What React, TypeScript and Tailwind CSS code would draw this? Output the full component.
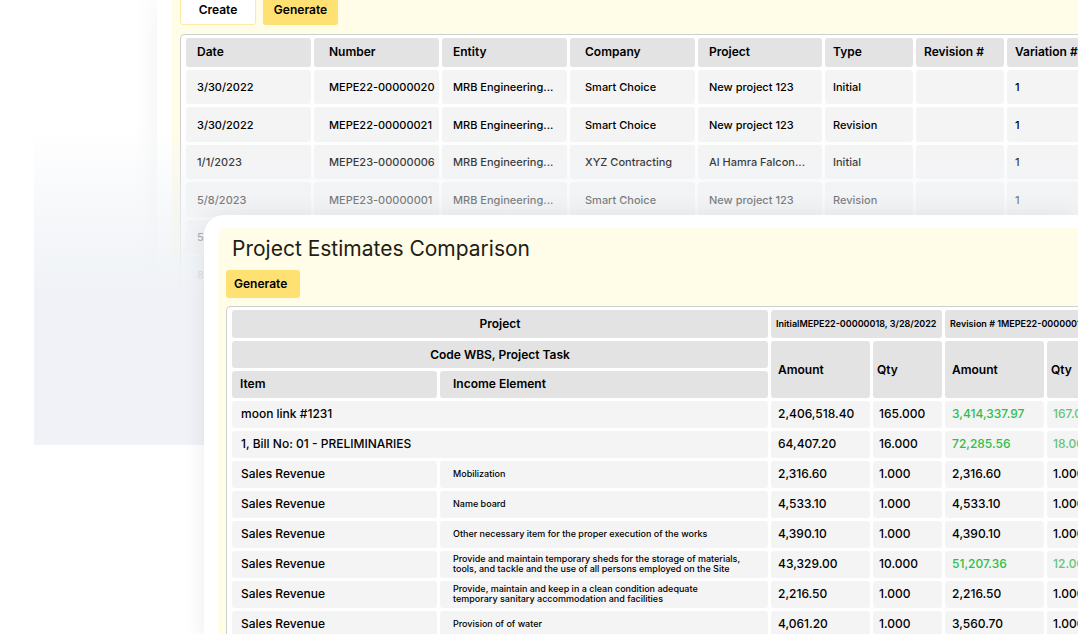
import clsx from "clsx";

type Estimate = {
    date: string;
    number: string;
    entity: string;
    company: string;
    project: string;
    type: string;
    revision: string;
    variation: string;
};

type Comparison = {
    item: string;
    element?: string;
    amount: string;
    qty: string;
    revAmount: string;
    revQty: string;
    changed?: boolean;
};

const estimateColumns: { key: keyof Estimate; label: string; width: string; pad: string }[] = [
    { key: "date", label: "Date", width: "w-[125px]", pad: "pl-[11px]" },
    { key: "number", label: "Number", width: "w-[125px]", pad: "pl-[15px]" },
    { key: "entity", label: "Entity", width: "w-[125px]", pad: "pl-[11px]" },
    { key: "company", label: "Company", width: "w-[125px]", pad: "pl-[15px]" },
    { key: "project", label: "Project", width: "w-[124px]", pad: "pl-[11px]" },
    { key: "type", label: "Type", width: "w-[88px]", pad: "pl-[8px]" },
    { key: "revision", label: "Revision #", width: "w-[88px]", pad: "pl-[8px]" },
    { key: "variation", label: "Variation #", width: "w-[88px]", pad: "pl-[8px]" },
];

const estimates: Estimate[] = [
    { date: "3/30/2022", number: "MEPE22-00000020", entity: "MRB Engineering...", company: "Smart Choice", project: "New project 123", type: "Initial", revision: "", variation: "1" },
    { date: "3/30/2022", number: "MEPE22-00000021", entity: "MRB Engineering...", company: "Smart Choice", project: "New project 123", type: "Revision", revision: "", variation: "1" },
    { date: "1/1/2023", number: "MEPE23-00000006", entity: "MRB Engineering...", company: "XYZ Contracting", project: "Al Hamra Falcon...", type: "Initial", revision: "", variation: "1" },
    { date: "5/8/2023", number: "MEPE23-00000001", entity: "MRB Engineering...", company: "Smart Choice", project: "New project 123", type: "Revision", revision: "", variation: "1" },
    { date: "5/", number: "", entity: "", company: "", project: "", type: "", revision: "", variation: "" },
    { date: "8", number: "", entity: "", company: "", project: "", type: "", revision: "", variation: "" },
];

const comparisons: Comparison[] = [
    { item: "moon link #1231", amount: "2,406,518.40", qty: "165.000", revAmount: "3,414,337.97", revQty: "167.000", changed: true },
    { item: "1, Bill No: 01 - PRELIMINARIES", amount: "64,407.20", qty: "16.000", revAmount: "72,285.56", revQty: "18.000", changed: true },
    { item: "Sales Revenue", element: "Mobilization", amount: "2,316.60", qty: "1.000", revAmount: "2,316.60", revQty: "1.000" },
    { item: "Sales Revenue", element: "Name board", amount: "4,533.10", qty: "1.000", revAmount: "4,533.10", revQty: "1.000" },
    { item: "Sales Revenue", element: "Other necessary item for the proper execution of the works", amount: "4,390.10", qty: "1.000", revAmount: "4,390.10", revQty: "1.000" },
    { item: "Sales Revenue", element: "Provide and maintain temporary sheds for the storage of materials,\ntools, and tackle and the use of all persons employed on the Site", amount: "43,329.00", qty: "10.000", revAmount: "51,207.36", revQty: "12.000", changed: true },
    { item: "Sales Revenue", element: "Provide, maintain and keep in a clean condition adequate\ntemporary sanitary accommodation and facilities", amount: "2,216.50", qty: "1.000", revAmount: "2,216.50", revQty: "1.000" },
    { item: "Sales Revenue", element: "Provision of of water", amount: "4,061.20", qty: "1.000", revAmount: "3,560.70", revQty: "1.000" },
];

const headCell = "rounded-[3px] bg-[#e3e3e3] p-0 text-[12px] leading-4 font-semibold";
const bodyCell = "rounded-[3px] bg-[#f4f4f4] p-0 pb-[2px] text-[12px] leading-4";

const EstimatesPanel = () => {
    return (
        <section className="col-start-1 row-start-1 ml-[157px] self-start bg-white pl-[15px] shadow-[0_0_28px_rgba(0,0,0,0.06)]">
            <div className="bg-[#fffce8] pl-2">
                <div className="-mt-1 flex gap-[7px]">
                    <button className="h-[29px] w-[76px] rounded-[3px] border border-[#ffe9a3] bg-white pb-[2px] text-[12px] font-semibold">
                        Create
                    </button>
                    <button className="h-[29px] w-[75px] rounded-[3px] bg-[#ffe072] pb-[2px] text-[12px] font-semibold">
                        Generate
                    </button>
                </div>
                <div className="mt-[9px] overflow-hidden rounded-tl-[5px] border-t border-l border-[#cfcfd2] bg-white pl-[2px]">
                    <table className="w-[915px] table-fixed border-separate border-spacing-[3px] text-left whitespace-nowrap">
                        <thead>
                            <tr className="h-[29px]">
                                {estimateColumns.map((col) => (
                                    <th key={col.key} scope="col" className={clsx(headCell, col.width, col.pad, "pb-[2px]")}>
                                        {col.label}
                                    </th>
                                ))}
                            </tr>
                        </thead>
                        <tbody>
                            {estimates.map((row, index) => (
                                <tr key={index} className="odd:h-[34px] even:h-[35px]">
                                    {estimateColumns.map((col) => (
                                        <td key={col.key} className={clsx("rounded-[3px] bg-[#f4f4f4] p-0 text-[11px] leading-4", col.pad)}>
                                            {row[col.key]}
                                        </td>
                                    ))}
                                </tr>
                            ))}
                        </tbody>
                    </table>
                </div>
            </div>
        </section>
    );
};

const ComparisonPanel = () => {
    return (
        <section className="col-start-1 row-start-1 mt-[215px] ml-[204px] rounded-tl-[20px] bg-white pt-[13px] pl-[14px] shadow-[0_0_24px_rgba(0,0,0,0.08)]">
            <div className="h-full rounded-tl-[8px] bg-[#fffce8] pl-2">
                <h2 className="pl-[6px] text-[21px] leading-[42px] font-normal text-[#1f1d14]">
                    Project Estimates Comparison
                </h2>
                <button className="block h-7 w-[74px] rounded-[3px] bg-[#ffe072] pl-2 text-left text-[12px] font-semibold">
                    Generate
                </button>
                <div className="mt-[8px] overflow-hidden rounded-tl-[5px] border-t border-l border-[#cfcfd2] bg-white pl-[2px]">
                    <table className="w-[890px] table-fixed border-separate border-spacing-[3px] text-left whitespace-nowrap">
                        <colgroup>
                            <col className="w-[205px]" />
                            <col className="w-[328px]" />
                            <col className="w-[99px]" />
                            <col className="w-[69px]" />
                            <col className="w-[99px]" />
                            <col className="w-[69px]" />
                        </colgroup>
                        <thead>
                            <tr className="h-7">
                                <th colSpan={2} className={clsx(headCell, "text-center")}>Project</th>
                                <th colSpan={2} className="rounded-[3px] bg-[#e3e3e3] p-0 pl-[5px] text-[9px] leading-4 font-semibold">
                                    InitialMEPE22-00000018, 3/28/2022
                                </th>
                                <th colSpan={2} className="rounded-[3px] bg-[#e3e3e3] p-0 pl-[5px] text-[9px] leading-4 font-semibold">
                                    Revision # 1MEPE22-00000019
                                </th>
                            </tr>
                            <tr className="h-[27px]">
                                <th colSpan={2} className={clsx(headCell, "text-center")}>Code WBS, Project Task</th>
                                <th rowSpan={2} className={clsx(headCell, "pl-[7px]")}>Amount</th>
                                <th rowSpan={2} className={clsx(headCell, "pl-1")}>Qty</th>
                                <th rowSpan={2} className={clsx(headCell, "pl-[7px]")}>Amount</th>
                                <th rowSpan={2} className={clsx(headCell, "pl-1")}>Qty</th>
                            </tr>
                            <tr className="h-[27px]">
                                <th className={clsx(headCell, "pl-2 pb-[2px]")}>Item</th>
                                <th className={clsx(headCell, "pl-[13px] pb-[2px]")}>Income Element</th>
                            </tr>
                        </thead>
                        <tbody>
                            {comparisons.map((row, index) => (
                                <tr key={index} className="h-[27px]">
                                    <td colSpan={row.element ? 1 : 2} className={clsx(bodyCell, "pl-[9px]")}>
                                        {row.item}
                                    </td>
                                    {row.element && (
                                        <td className="rounded-[3px] bg-[#f4f4f4] p-0 pb-[2px] pl-[13px] text-[9px] leading-[10px] whitespace-pre">
                                            {row.element}
                                        </td>
                                    )}
                                    <td className={clsx(bodyCell, "pl-[7px]")}>{row.amount}</td>
                                    <td className={clsx(bodyCell, "pl-[6px]")}>{row.qty}</td>
                                    <td className={clsx(bodyCell, "pl-[7px]", row.changed && "text-[#2fbe4a]")}>
                                        {row.revAmount}
                                    </td>
                                    <td className={clsx(bodyCell, "pl-[6px]", row.changed && "text-[#66c47a]")}>
                                        {row.revQty}
                                    </td>
                                </tr>
                            ))}
                        </tbody>
                    </table>
                </div>
            </div>
        </section>
    );
};

export default function App() {
    return (
        <main className="grid h-screen grid-cols-[minmax(0,1fr)] overflow-hidden bg-white font-['Inter',sans-serif] font-medium text-black">
            <EstimatesPanel />
            {/* haze that fades out the list behind the comparison */}
            <div className="pointer-events-none z-10 col-start-1 row-start-1 mt-[130px] ml-[34px] h-[315px] bg-[linear-gradient(to_bottom,rgba(240,243,247,0)_0%,rgba(240,243,247,0.5)_22%,rgba(240,243,247,0.9)_44%,rgb(240,242,247)_52%)]" />
            <div className="z-20 col-start-1 row-start-1 grid grid-cols-[minmax(0,1fr)]">
                <ComparisonPanel />
            </div>
        </main>
    );
}
